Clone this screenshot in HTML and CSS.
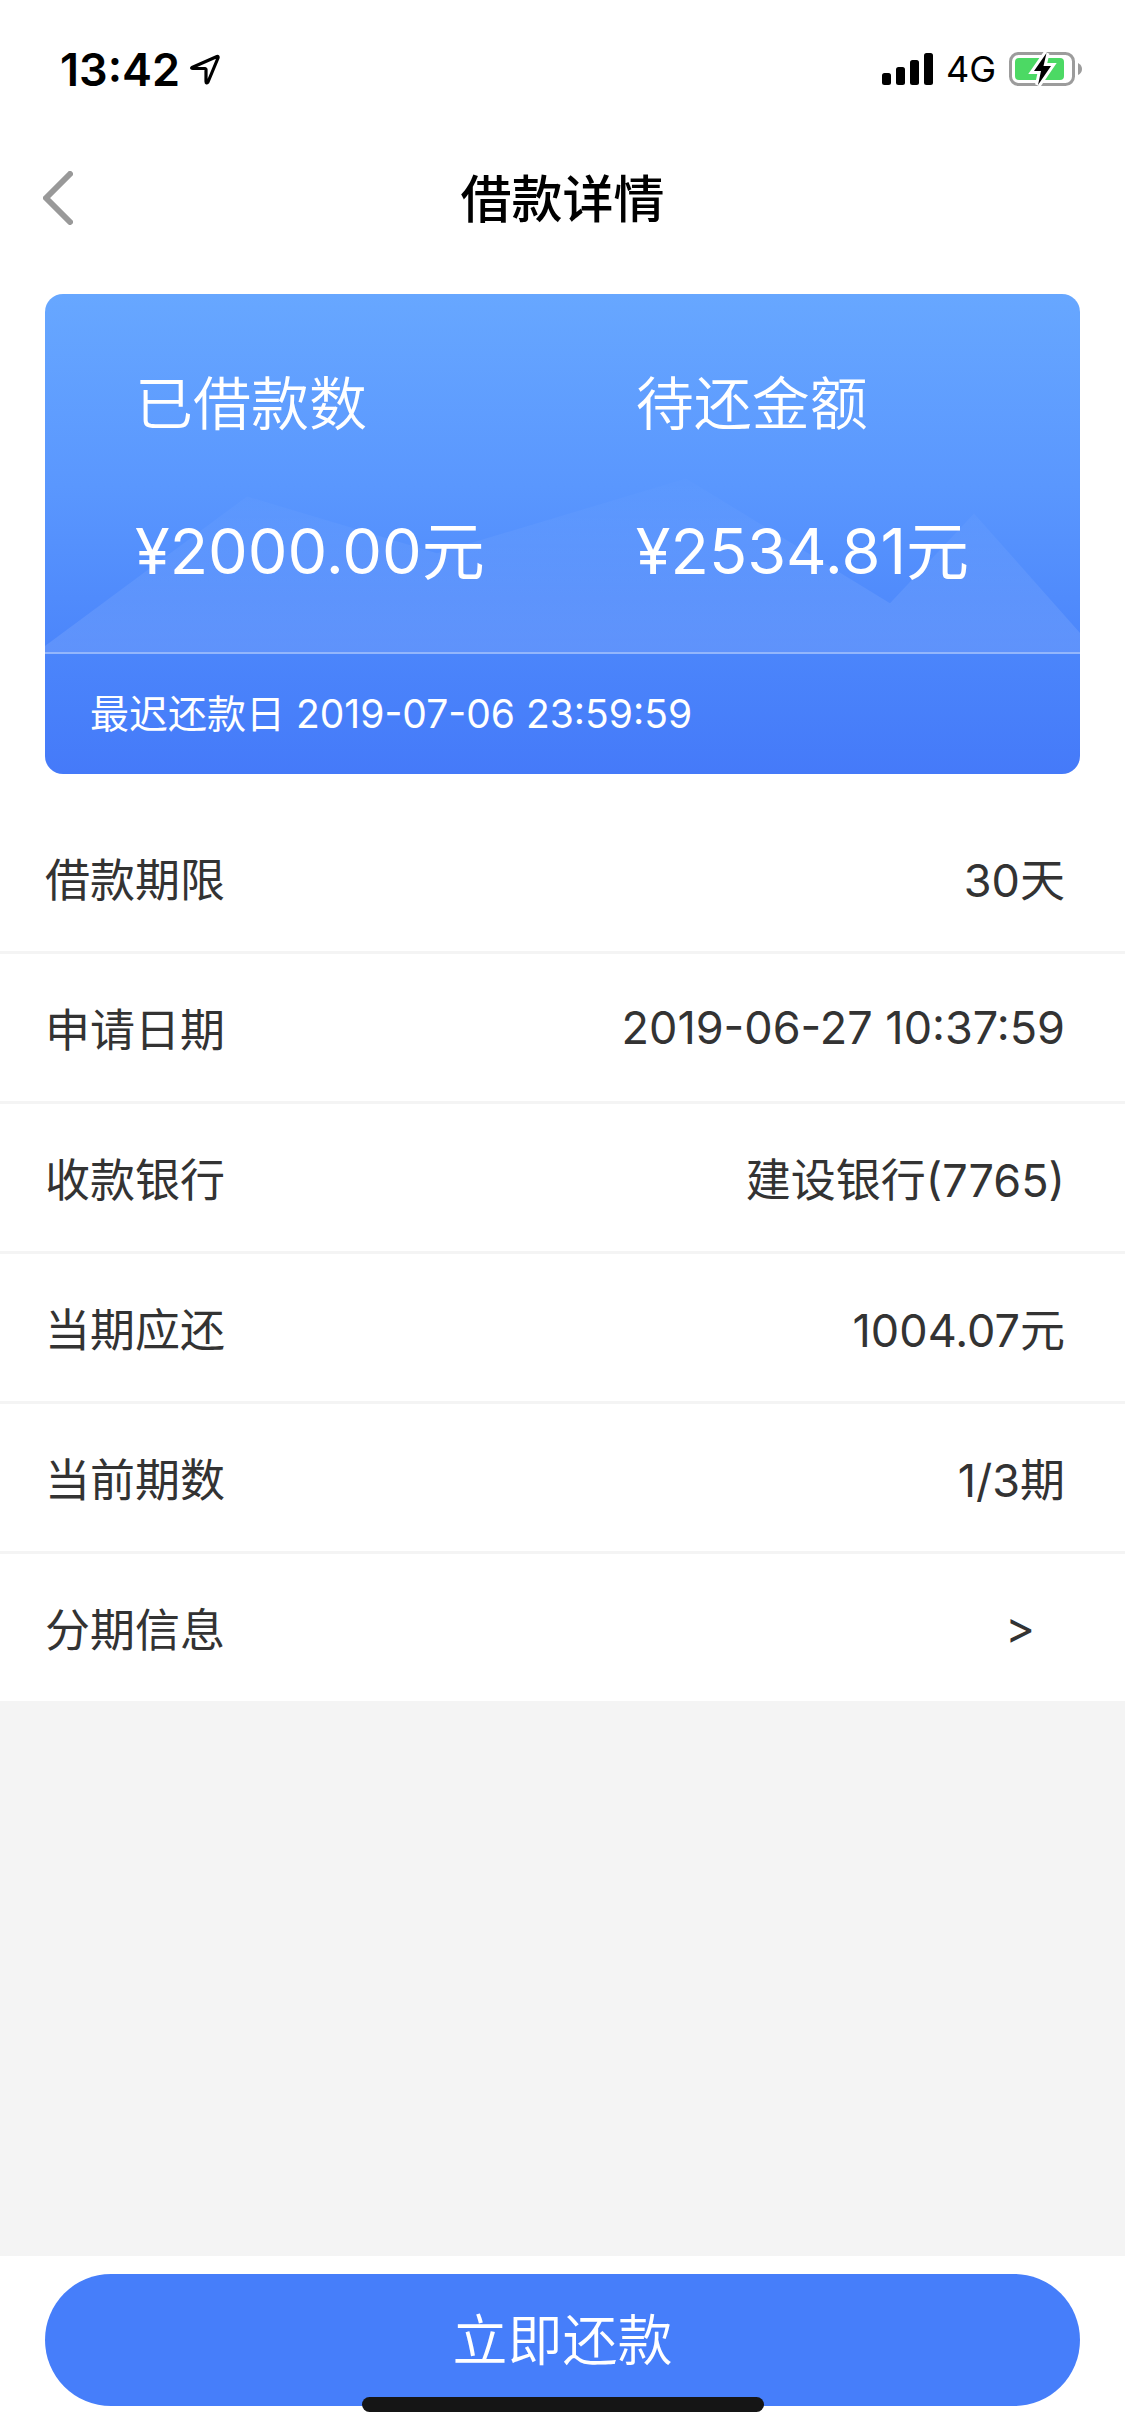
FILE: index.html
```html
<!DOCTYPE html>
<html lang="zh-CN">
<head>
    <meta charset="UTF-8">
    <meta name="viewport" content="width=device-width, initial-scale=1">
    <title>借款详情</title>
    <link rel="stylesheet" href="styles.css">
</head>
<body>
    <div class="status-bar">
        <div class="status-left">
            <span class="time">13:42</span>
            <svg class="location" viewBox="0 0 30 31" width="30" height="31">
                <path d="M2 13.5L27 2.5Q28.5 2.200 28 4L18 28Q16 30 16 27.500V15.500L15 14.500H3Q1 14.200 2 13.500Z" fill="none" stroke="#000" stroke-width="3.200" stroke-linejoin="round"/>
            </svg>
        </div>
        <div class="status-right">
            <svg viewBox="0 0 51 32" width="51" height="32">
                <rect x="0" y="20" width="9" height="12" rx="2.500"/>
                <rect x="14" y="14" width="9" height="18" rx="2.500"/>
                <rect x="28" y="7" width="9" height="25" rx="2.500"/>
                <rect x="42" y="0" width="9" height="32" rx="2.500"/>
            </svg>
            <span class="network">4G</span>
            <svg viewBox="0 0 74 36" width="74" height="36">
                <rect x="1.500" y="2.500" width="63" height="31" rx="8" fill="none" stroke="#9c9c9c" stroke-width="3"/>
                <path d="M69 12Q73 14 73 18T69 24Z" fill="#9c9c9c"/>
                <rect x="6" y="7" width="49" height="22" rx="4" fill="#4cd964"/>
                <path d="M37.500 2L25 20H32L29 34L42 15H34.500Z" fill="#000" stroke="#fff" stroke-width="6" paint-order="stroke"/>
            </svg>
        </div>
    </div>

    <header class="nav">
        <button class="back" type="button" aria-label="返回">
            <svg viewBox="0 0 30 54" width="30" height="54">
                <path d="M27 3L3 27L27 51" fill="none" stroke="#999" stroke-width="6" stroke-linecap="round" stroke-linejoin="round"/>
            </svg>
        </button>
        <h1>借款详情</h1>
    </header>

    <main>
        <section class="card">
            <div class="card-main">
                <svg class="mountains" viewBox="0 0 1035 359" preserveAspectRatio="none">
                    <defs>
                        <linearGradient id="fade" x1="0" y1="0" x2="0" y2="1">
                            <stop offset="0" stop-color="#fff" stop-opacity="0.010"/>
                            <stop offset="1" stop-color="#fff" stop-opacity="0.110"/>
                        </linearGradient>
                    </defs>
                    <path d="M0 353L202 203L392 260L641 185L845 310L929 220L1035 340V359H0Z" fill="url(#fade)"/>
                </svg>
                <div class="amount">
                    <span class="amount-label">已借款数</span>
                    <span class="amount-value">¥2000.00元</span>
                </div>
                <div class="amount">
                    <span class="amount-label">待还金额</span>
                    <span class="amount-value">¥2534.81元</span>
                </div>
            </div>
            <p class="card-foot">最迟还款日 2019-07-06 23:59:59</p>
        </section>

        <dl class="list">
            <div class="row"><dt>借款期限</dt><dd>30天</dd></div>
            <div class="row"><dt>申请日期</dt><dd>2019-06-27 10:37:59</dd></div>
            <div class="row"><dt>收款银行</dt><dd>建设银行(7765)</dd></div>
            <div class="row"><dt>当期应还</dt><dd>1004.07元</dd></div>
            <div class="row"><dt>当前期数</dt><dd>1/3期</dd></div>
            <div class="row"><dt>分期信息</dt><dd><a class="more" href="#" aria-label="查看分期信息">&gt;</a></dd></div>
        </dl>
    </main>

    <footer class="footer">
        <button class="repay" type="button">立即还款</button>
        <div class="home-indicator"></div>
    </footer>
</body>
</html>
```

FILE: styles.css
```css
* {
    box-sizing: border-box;
}
body {
    display: flex;
    flex-direction: column;
    min-height: 100vh;
    margin: 0;
    font-family: Inter, "Noto Sans CJK SC", sans-serif;
    font-size: 45px;
    background: #f4f4f4;
    color: #333;
}
button {
    border: 0;
    padding: 0;
    font-family: inherit;
    cursor: pointer;
}

/* status bar */
.status-bar {
    display: flex;
    justify-content: space-between;
    height: 132px;
    padding: 6px 42px 0 60px;
    background: #fff;
    color: #000;
}
.status-left,
.status-right {
    display: flex;
    align-items: center;
}
.status-left {
    gap: 10px;
}
.status-right {
    gap: 13px;
}
.time {
    font-weight: 600;
}
.network {
    font-size: 36px;
}

/* title bar */
.nav {
    position: relative;
    display: flex;
    align-items: center;
    justify-content: center;
    height: 132px;
    padding-bottom: 4px;
    background: #fff;
    color: #000;
}
.nav h1 {
    margin: 0;
    font-size: 51px;
    font-weight: 500;
}
.back {
    position: absolute;
    left: 0;
    top: 0;
    display: flex;
    align-items: center;
    height: 100%;
    padding: 0 43px;
    background: none;
}

main {
    padding-top: 30px;
    background: #fff;
}

/* summary card */
.card {
    margin: 0 45px 30px;
    border-radius: 18px;
    overflow: hidden;
    background: linear-gradient(#67a7ff, #5a97fe 40%, #4b85fb 75%, #457af9);
    color: #fff;
}
.card-main {
    position: relative;
    display: grid;
    grid-template-columns: 53% 1fr;
    height: 360px;
    padding: 68px 0 0 90px;
    border-bottom: 2px solid rgba(255, 255, 255, 0.4);
}
.mountains {
    position: absolute;
    left: 0;
    top: 0;
    width: 100%;
    height: 100%;
}
.amount {
    position: relative;
    display: flex;
    flex-direction: column;
    gap: 60px;
}
.amount-label {
    font-size: 58px;
    line-height: 84px;
    font-weight: 350;
}
.amount-value {
    font-size: 63px;
    line-height: 90px;
}
.card-foot {
    margin: 0;
    padding: 0 45px;
    font-size: 39px;
    line-height: 120px;
}

/* detail rows */
.list {
    margin: 0;
}
.row {
    display: flex;
    align-items: center;
    justify-content: space-between;
    height: 150px;
    padding: 0 60px 0 45px;
    border-bottom: 3px solid #f4f4f4;
}
.row:last-child {
    height: 147px;
    border-bottom: 0;
}
.row dd {
    margin: 0;
}
.more {
    padding: 0 30px;
    color: inherit;
    text-decoration: none;
}

/* bottom button */
.footer {
    position: relative;
    margin-top: auto;
    padding: 18px 45px 30px;
    background: #fff;
}
.repay {
    display: block;
    width: 100%;
    height: 132px;
    padding-bottom: 8px;
    border-radius: 66px;
    background: #467efa;
    color: #fff;
    font-size: 55px;
    font-weight: 350;
}
.home-indicator {
    position: absolute;
    left: 50%;
    bottom: 24px;
    width: 402px;
    height: 15px;
    margin-left: -201px;
    border-radius: 8px;
    background: #151515;
}
```
